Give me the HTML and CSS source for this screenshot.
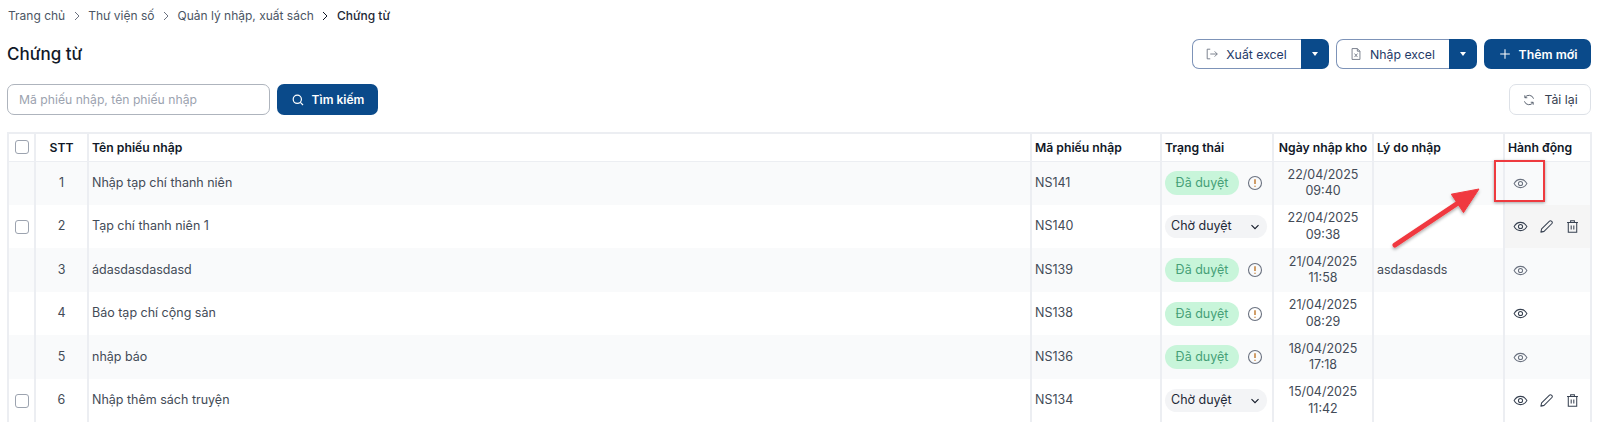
FILE: index.html
```html
<!DOCTYPE html>
<html>
<head>
    <title>Chứng từ</title>
    <link rel="stylesheet" href="styles.css">
</head>
<body>
    <svg class="icon-defs" width="0" height="0">
        <symbol id="i-eye" viewBox="0 0 16 16">
            <path d="M1.2 8C2.8 5.1 5.2 3.6 8 3.6s5.2 1.5 6.8 4.4c-1.6 2.9-4 4.4-6.8 4.4S2.8 10.900 1.200 8z" fill="none" stroke="currentColor" stroke-width="1.100"/>
            <circle cx="8" cy="8" r="2.200" fill="none" stroke="currentColor" stroke-width="1.100"/>
        </symbol>
        <symbol id="i-pen" viewBox="0 0 16 16">
            <path d="M2 14l.8-3.400L11.200 2.200a1.400 1.400 0 0 1 2 0l.6.600a1.400 1.400 0 0 1 0 2L5.400 13.200z" fill="none" stroke="currentColor" stroke-width="1.100" stroke-linejoin="round"/>
        </symbol>
        <symbol id="i-trash" viewBox="0 0 16 16">
            <path d="M2.200 3.800h11.600M6 3.600V1.800h4v1.800M3.500 3.800v10.400h9V3.800M6.600 6.800v4.400M9.400 6.800v4.400" fill="none" stroke="currentColor" stroke-width="1.100"/>
        </symbol>
        <symbol id="i-info" viewBox="0 0 16 16">
            <circle cx="8" cy="8" r="6.500" fill="none" stroke="currentColor" stroke-width="1.100"/>
            <path d="M8 4.200v4.800M8 10.700v1.100" fill="none" stroke="#b45f06" stroke-width="1.200"/>
        </symbol>
        <symbol id="i-chevron" viewBox="0 0 6 10">
            <path d="M1 1l4 4-4 4" fill="none" stroke="currentColor" stroke-width="1"/>
        </symbol>
    </svg>

    <div class="breadcrumb">
        <span>Trang chủ</span><svg class="sep"><use href="#i-chevron"/></svg>
        <span>Thư viện số</span><svg class="sep"><use href="#i-chevron"/></svg>
        <span>Quản lý nhập, xuất sách</span><svg class="sep dark"><use href="#i-chevron"/></svg>
        <span class="current">Chứng từ</span>
    </div>

    <div class="title-row">
        <h1>Chứng từ</h1>
        <div class="actions">
            <div class="split">
                <button class="split-main">
                    <svg class="btn-icon" viewBox="0 0 16 16"><path d="M6 2.500H2.500v11H6M6 8h8M11 5l3 3-3 3" fill="none" stroke="#6b7280" stroke-width="1"/></svg>
                    Xuất excel
                </button>
                <button class="split-arrow"><span class="caret"></span></button>
            </div>
            <div class="split">
                <button class="split-main">
                    <svg class="btn-icon" viewBox="0 0 16 16"><path d="M3.500 1.800h6l3 3v9.400h-9zM9.500 1.800v3h3M6.300 7.500l3.400 4M9.700 7.500l-3.400 4" fill="none" stroke="#6b7280" stroke-width="1"/></svg>
                    Nhập excel
                </button>
                <button class="split-arrow"><span class="caret"></span></button>
            </div>
            <button class="btn-primary add-btn">
                <svg class="btn-icon" viewBox="0 0 16 16"><path d="M8 2.500v11M2.500 8h11" fill="none" stroke="#fff" stroke-width="1.200"/></svg>
                Thêm mới
            </button>
        </div>
    </div>

    <div class="filter-row">
        <input class="search-input" type="text" placeholder="Mã phiếu nhập, tên phiếu nhập">
        <button class="btn-primary search-btn">
            <svg class="btn-icon" viewBox="0 0 16 16"><circle cx="7.200" cy="7.200" r="4.700" fill="none" stroke="#fff" stroke-width="1.400"/><path d="M10.700 10.700l3 3" stroke="#fff" stroke-width="1.400"/></svg>
            Tìm kiếm
        </button>
        <button class="reload-btn">
            <svg class="btn-icon" viewBox="0 0 16 16"><path d="M13.200 6.500A5.400 5.400 0 0 0 3.400 5.200M2.800 9.500a5.400 5.400 0 0 0 9.800 1.300M3.200 2.600v2.800H6M12.800 13.400v-2.800H10" fill="none" stroke="#4b5563" stroke-width="1"/></svg>
            Tải lại
        </button>
    </div>

    <table class="grid">
        <colgroup>
            <col class="c-check"><col class="c-stt"><col class="c-name"><col class="c-code">
            <col class="c-status"><col class="c-date"><col class="c-reason"><col class="c-action">
        </colgroup>
        <thead>
            <tr>
                <th><span class="check"></span></th>
                <th class="center">STT</th>
                <th>Tên phiếu nhập</th>
                <th>Mã phiếu nhập</th>
                <th>Trạng thái</th>
                <th class="center">Ngày nhập kho</th>
                <th>Lý do nhập</th>
                <th>Hành động</th>
            </tr>
        </thead>
        <tbody>
            <tr class="odd">
                <td></td><td class="center">1</td><td>Nhập tạp chí thanh niên</td><td>NS141</td>
                <td><div class="status"><span class="pill">Đã duyệt</span><svg class="info"><use href="#i-info"/></svg></div></td>
                <td class="center">22/04/2025<br>09:40</td><td></td>
                <td><div class="row-actions"><svg class="act"><use href="#i-eye"/></svg></div></td>
            </tr>
            <tr>
                <td><span class="check"></span></td><td class="center">2</td><td>Tạp chí thanh niên 1</td><td>NS140</td>
                <td><div class="select"><span>Chờ duyệt</span><svg class="chev" viewBox="0 0 10 10"><path d="M1.500 3.200L5 6.700l3.500-3.500" fill="none" stroke="#111827" stroke-width="1.100"/></svg></div></td>
                <td class="center">22/04/2025<br>09:38</td><td></td>
                <td class="hovered"><div class="row-actions dark"><svg class="act"><use href="#i-eye"/></svg><svg class="act"><use href="#i-pen"/></svg><svg class="act"><use href="#i-trash"/></svg></div></td>
            </tr>
            <tr class="odd">
                <td></td><td class="center">3</td><td>ádasdasdasdasd</td><td>NS139</td>
                <td><div class="status"><span class="pill">Đã duyệt</span><svg class="info"><use href="#i-info"/></svg></div></td>
                <td class="center">21/04/2025<br>11:58</td><td>asdasdasds</td>
                <td><div class="row-actions"><svg class="act"><use href="#i-eye"/></svg></div></td>
            </tr>
            <tr>
                <td></td><td class="center">4</td><td>Báo tạp chí cộng sản</td><td>NS138</td>
                <td><div class="status"><span class="pill">Đã duyệt</span><svg class="info"><use href="#i-info"/></svg></div></td>
                <td class="center">21/04/2025<br>08:29</td><td></td>
                <td><div class="row-actions dark"><svg class="act"><use href="#i-eye"/></svg></div></td>
            </tr>
            <tr class="odd">
                <td></td><td class="center">5</td><td>nhập báo</td><td>NS136</td>
                <td><div class="status"><span class="pill">Đã duyệt</span><svg class="info"><use href="#i-info"/></svg></div></td>
                <td class="center">18/04/2025<br>17:18</td><td></td>
                <td><div class="row-actions"><svg class="act"><use href="#i-eye"/></svg></div></td>
            </tr>
            <tr>
                <td><span class="check"></span></td><td class="center">6</td><td>Nhập thêm sách truyện</td><td>NS134</td>
                <td><div class="select"><span>Chờ duyệt</span><svg class="chev" viewBox="0 0 10 10"><path d="M1.500 3.200L5 6.700l3.500-3.500" fill="none" stroke="#111827" stroke-width="1.100"/></svg></div></td>
                <td class="center">15/04/2025<br>11:42</td><td></td>
                <td><div class="row-actions dark"><svg class="act"><use href="#i-eye"/></svg><svg class="act"><use href="#i-pen"/></svg><svg class="act"><use href="#i-trash"/></svg></div></td>
            </tr>
        </tbody>
    </table>

    <!-- annotation drawn over the screenshot -->
    <div class="mark-box"></div>
    <svg class="mark-arrow" width="110" height="85" viewBox="0 0 110 85">
        <defs><filter id="sh" x="-20%" y="-20%" width="140%" height="140%"><feDropShadow dx="0" dy="2" stdDeviation="1.500" flood-color="#000" flood-opacity="0.3"/></filter></defs>
        <g filter="url(#sh)">
            <path d="M10 70L73 28" stroke="#f0383f" stroke-width="5" stroke-linecap="round"/>
            <path d="M94 14L66.300 19.200 78.500 37.600z" fill="#f0383f" stroke="#f0383f" stroke-width="1" stroke-linejoin="round"/>
        </g>
    </svg>
</body>
</html>
```

FILE: styles.css
```css
* {
    box-sizing: border-box;
}

html, body {
    height: 425px;
    overflow: hidden;
}

body {
    font-family: 'Inter', sans-serif;
    font-size: 13px;
    margin: 0;
    padding: 8px 9px 0 7px;
    background-color: white;
    color: #374151;
    position: relative;
}

.icon-defs {
    position: absolute;
}

.breadcrumb {
    display: flex;
    align-items: center;
    height: 15px;
    font-size: 12px;
    color: #4b5563;
    padding-left: 1px;
}

.breadcrumb .sep {
    width: 6px;
    height: 10px;
    margin: 0 8.500px;
    color: #6b7280;
}

.breadcrumb .sep.dark {
    color: #111827;
}

.breadcrumb .current {
    color: #1f2937;
    font-weight: 500;
}

.title-row {
    display: flex;
    justify-content: space-between;
    align-items: center;
    margin-top: 16px;
    height: 30px;
}

.title-row h1 {
    margin: 0;
    font-size: 17px;
    font-weight: 500;
    color: #111827;
}

.actions {
    display: flex;
    gap: 7px;
}

.split {
    display: flex;
    height: 30px;
}

button {
    font-family: 'Inter', sans-serif;
    font-size: 12.300px;
    cursor: pointer;
}

.btn-icon {
    width: 14px;
    height: 14px;
    flex: none;
}

.split-main {
    display: flex;
    align-items: center;
    justify-content: center;
    gap: 7px;
    width: 109px;
    background-color: white;
    border: 1px solid #7d93b8;
    border-right: none;
    border-radius: 7px 0 0 7px;
    color: #1f3a68;
    padding: 0 2px 0 0;
}

.split-arrow {
    width: 28px;
    background-color: #0a4a8a;
    border: none;
    border-radius: 0 7px 7px 0;
    padding: 0;
    display: flex;
    align-items: center;
    justify-content: center;
}

.split + .split .split-main {
    width: 113px;
}

.caret {
    width: 0;
    height: 0;
    border-left: 3px solid transparent;
    border-right: 3px solid transparent;
    border-top: 4px solid white;
}

.btn-primary {
    display: flex;
    align-items: center;
    justify-content: center;
    background-color: #0a4a8a;
    color: white;
    border: none;
    border-radius: 7px;
    font-weight: 600;
}

.add-btn {
    width: 107px;
    gap: 7px;
}

.filter-row {
    display: flex;
    align-items: flex-start;
    margin-top: 15px;
    height: 30px;
}

.search-input {
    width: 263px;
    height: 31px;
    border: 1px solid #aeb4bd;
    border-radius: 7px;
    padding: 0 11px;
    font-family: 'Inter', sans-serif;
    font-size: 12.200px;
    outline: none;
}

.search-input::placeholder {
    color: #9ca3af;
}

.search-btn {
    width: 101px;
    height: 31px;
    margin-left: 7px;
    gap: 7px;
    font-size: 12px;
}

.reload-btn {
    display: flex;
    align-items: center;
    justify-content: center;
    gap: 8px;
    width: 82px;
    height: 31px;
    margin-left: auto;
    background-color: white;
    border: 1px solid #dde1e7;
    border-radius: 7px;
    color: #374151;
}

.grid {
    width: 1583px;
    margin-top: 18px;
    border-collapse: collapse;
    table-layout: fixed;
}

.c-check { width: 27px; }
.c-stt { width: 53px; }
.c-name { width: 943px; }
.c-code { width: 130px; }
.c-status { width: 112px; }
.c-date { width: 100px; }
.c-reason { width: 131px; }
.c-action { width: 87px; }

.grid th {
    height: 28px;
    padding: 0 3px;
    border: 2px solid #eceef2;
    border-bottom-width: 1px;
    font-size: 12.200px;
    font-weight: 600;
    color: #111827;
    text-align: left;
    white-space: nowrap;
}

.grid td {
    height: 43px;
    padding: 0 3px;
    border-left: 2px solid #eceef2;
    border-right: 2px solid #eceef2;
    font-size: 12.500px;
    line-height: 16.500px;
    color: #434b57;
}

.grid .center {
    text-align: center;
}

.grid tr.odd td {
    height: 44px;
    background-color: #f9fafb;
}

.grid td.hovered {
    background-color: #f5f5f5;
}

.check {
    display: block;
    width: 14px;
    height: 14px;
    margin: 0 auto;
    border: 1px solid #9ca3af;
    border-radius: 3px;
    background-color: white;
}

.status {
    display: flex;
    align-items: center;
    gap: 8px;
}

.pill {
    width: 74px;
    height: 24px;
    line-height: 24px;
    text-align: center;
    border-radius: 12px;
    background-color: #c8f5da;
    color: #46a077;
}

.info {
    width: 16px;
    height: 16px;
    color: #6b7280;
}

.select {
    display: flex;
    align-items: center;
    justify-content: space-between;
    width: 102px;
    height: 23px;
    padding: 0 7px 0 6px;
    border-radius: 12px;
    background-color: #f3f4f6;
    color: #1f2937;
}

.chev {
    width: 10px;
    height: 10px;
}

.row-actions {
    display: flex;
    align-items: center;
    gap: 11px;
    padding-left: 5px;
    color: #6b7280;
}

.row-actions.dark {
    color: #374151;
}

.act {
    width: 15px;
    height: 15px;
}

.mark-box {
    position: absolute;
    left: 1494px;
    top: 160px;
    width: 51px;
    height: 42px;
    border: 2.500px solid #ee3a3f;
    box-shadow: 0 1px 3px rgba(0, 0, 0, 0.35);
}

.mark-arrow {
    position: absolute;
    left: 1385px;
    top: 175px;
}
```
